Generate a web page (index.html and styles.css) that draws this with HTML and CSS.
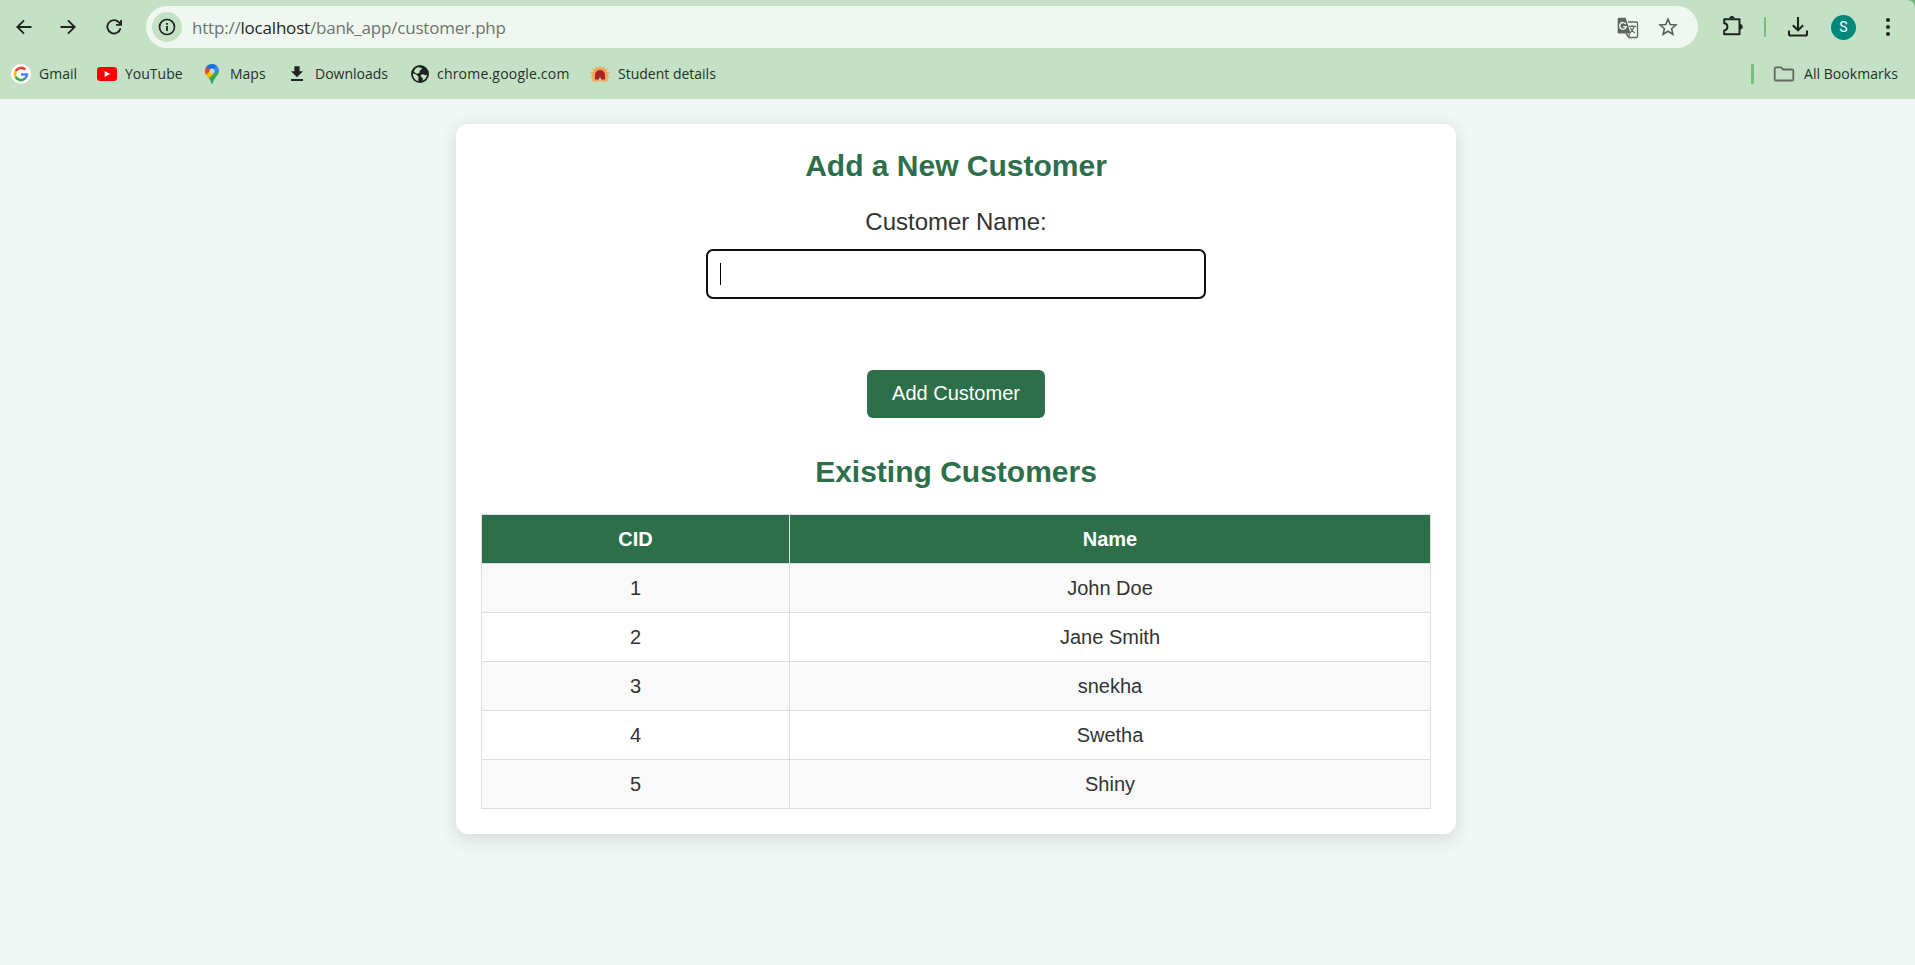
FILE: index.html
```html
<!DOCTYPE html>
<html lang="en">
<head>
<meta charset="utf-8">
<title>Customers</title>
<link rel="stylesheet" href="styles.css">
</head>
<body>
<div class="frame">
<header class="browser">
  <div class="toolbar">
    <svg class="nav-icon" viewBox="0 0 24 24"><path d="M21 12H4.500M12 4l-8 8 8 8"/></svg>
    <svg class="nav-icon forward" viewBox="0 0 24 24"><path d="M3 12h16.500M12 4l8 8-8 8"/></svg>
    <svg class="nav-icon" viewBox="0 0 24 24"><path d="M19.800 13.500A8 8 0 1 1 17.800 6.300L20 8.500M20.500 3.500v6h-6"/></svg>
    <div class="omnibox">
      <span class="site-info"><svg width="20" height="20" viewBox="0 0 20 20"><circle cx="10" cy="10" r="7.500" fill="none" stroke="#1f2421" stroke-width="1.700"/><path fill="#1f2421" d="M9.100 9h1.800v5H9.100zM9.100 6h1.800v1.800H9.100z"/></svg></span>
      <span class="url">http://<b class="host">localhost</b>/bank_app/customer.php</span>
      <svg class="translate" width="22" height="22" viewBox="0 0 22 22">
        <path d="M11 5h8.200q1.300 0 1.300 1.300v12.900q0 1.300-1.300 1.300H12l-3-4" fill="none" stroke="#5f6561" stroke-width="1.300"/>
        <path d="M2 .7h6.600l5 15.800H2Q.700 16.500.700 15.200V2Q.700.700 2 .700z" fill="#5f6561"/>
        <path d="M8.700 7A3.300 3.300 0 1 0 9.200 9.600H6.200" fill="none" stroke="#f0f7f0" stroke-width="1.400"/>
        <path d="M11.500 9.400h7.500M15.100 7.900v1.500M17.300 9.400q-1 4-4.700 6.800M13.300 10.800q1.500 3.300 4.500 5.300M12.500 17l-.8 3" fill="none" stroke="#5f6561" stroke-width="1.200"/>
      </svg>
      <svg class="star" width="20" height="20" viewBox="0 0 20 20"><path d="M10 2.200l2.200 5.300 5.700.5-4.300 3.700 1.300 5.600-4.900-3-4.900 3 1.300-5.600L2.100 8l5.700-.5z" fill="none" stroke="#5a615c" stroke-width="1.600"/></svg>
    </div>
    <svg class="puzzle" width="22" height="22" viewBox="0 0 22 22"><path d="M2.200 4.200h15.300v15H2.200v-3.800c4.300-.3 4.300-7 0-7.200z" fill="none" stroke="#1f2421" stroke-width="2" stroke-linejoin="round"/><path d="M7.200 3.600a2.700 2.700 0 0 1 5.400 0zM18 9a2.700 2.700 0 0 1 0 5.400z" fill="#1f2421"/></svg>
    <span class="divider"></span>
    <svg class="download" width="22" height="22" viewBox="0 0 22 22"><path d="M11 1v13M5.800 9.200l5.200 5 5.200-5M2 14.500v3.500q0 1.500 1.500 1.500h15q1.500 0 1.500-1.500v-3.500" fill="none" stroke="#1f2421" stroke-width="2.100"/></svg>
    <span class="avatar">S</span>
    <svg class="dots" width="6" height="20" viewBox="0 0 6 20"><g fill="#1f2421"><circle cx="3" cy="3" r="2"/><circle cx="3" cy="10" r="2"/><circle cx="3" cy="17" r="2"/></g></svg>
  </div>
  <nav class="bookmarks">
    <a class="bookmark"><svg width="20" height="20" viewBox="0 0 20 20"><circle cx="10" cy="10" r="10" fill="#fff"/><g fill="none" stroke-width="2.600"><path d="M14.300 5.700A6.100 6.100 0 0 0 4.700 7" stroke="#ea4335"/><path d="M4.700 7a6.100 6.100 0 0 0 0 6" stroke="#fbbc05"/><path d="M4.700 13a6.100 6.100 0 0 0 9.300 1.600" stroke="#34a853"/><path d="M14 14.600a6.100 6.100 0 0 0 2-4.100H10" stroke="#4285f4"/></g></svg><span>Gmail</span></a>
    <a class="bookmark"><svg width="20" height="20" viewBox="0 0 20 20"><rect y="3" width="20" height="14" rx="3.200" fill="#f00"/><path d="M7.700 7v6l5.400-3z" fill="#fff"/></svg><span>YouTube</span></a>
    <a class="bookmark"><svg width="20" height="20" viewBox="0 0 20 20"><defs><clipPath id="pin"><path d="M10 0a7 7 0 0 0-7 7c0 4.300 5 6.500 6.200 12 .2 1.200 1.400 1.200 1.600 0C12 13.500 17 11.300 17 7a7 7 0 0 0-7-7z"/></clipPath></defs><g clip-path="url(#pin)"><path fill="#34a853" d="M0 0h20v20H0z"/><path fill="#fbbc04" d="M1 10L9 2l5 6-9 8z"/><path fill="#ea4335" d="M0 0h5l5 5-7 7-3-3z"/><path fill="#1a73e8" d="M4 2l6-4 6 3-6 6z"/><path fill="#4285f4" d="M15.500 1L18 7l-7 3-1-3z"/></g><circle cx="10" cy="7" r="2.500" fill="#c4e1c5"/></svg><span>Maps</span></a>
    <a class="bookmark"><svg width="20" height="20" viewBox="0 0 20 20"><path d="M7.400 2.300h5.200v5H16l-6 6-6-6h3.400zM4 15h12v2H4z" fill="#1f2421"/></svg><span>Downloads</span></a>
    <a class="bookmark"><svg width="20" height="20" viewBox="0 0 20 20"><circle cx="10" cy="10" r="9" fill="#1f2421"/><path fill="#c4e1c5" d="M3 9.200l3.200 1.300 2.300 2.200-.2 4.500A7.300 7.300 0 0 1 3 9.200zM8 3.100c1 .9 3.200.4 3.800 1.200.5 1-1.300 1.500-2 2.400-.6.700.7 1.800-.8 2.200-1.300.4-2 1.500-3.200.4L3.800 7.500A7 7 0 0 1 8 3.100zM11 10.700c1.100-1 2.500-.5 3.600.2.800.6 1.600.3 2.400.2-.5 2.600-2 4.600-4.500 5.600.8-1.500.4-2.600-.8-3.500-.7-.7-1.200-1.600-.7-2.500z"/></svg><span class="site">chrome.google.com</span></a>
    <a class="bookmark"><svg width="20" height="20" viewBox="0 0 20 20"><path fill="#f2a65a" d="M10 1.800l1.500 2.300 2.500-1.600.5 2.800 3-.5-.9 2.900 2.900.8-2 2.200 2.300 2-2.600 1.300 1.300 2.500-3.500 1H5l-3.500-1 1.300-2.500L.2 12.700l2.300-2-2-2.200 2.900-.8-.9-2.900 3 .5.500-2.800 2.500 1.600z"/><path fill="#aa231f" d="M5 15.500V11a5 5 0 0 1 10 0v4.500z"/><path d="M8 16.500l2-3.500 2 3.500z" fill="#d8c2b6"/></svg><span>Student details</span></a>
    <span class="divider wide"></span>
    <a class="bookmark all"><svg width="22" height="20" viewBox="0 0 22 20"><path d="M3 3.300h5.200l2 2.200H19q1.300 0 1.300 1.300v8.400q0 1.300-1.300 1.300H3q-1.300 0-1.300-1.300V4.600Q1.700 3.300 3 3.300z" fill="none" stroke="#626963" stroke-width="1.800"/></svg><span>All Bookmarks</span></a>
  </nav>
</header>
</div>
<main class="card">
  <h2 class="title">Add a New Customer</h2>
  <form class="form">
    <label class="label" for="name">Customer Name:</label>
    <div class="field" id="name"><span class="caret"></span></div>
    <button class="submit" type="button">Add Customer</button>
  </form>
  <h2 class="title">Existing Customers</h2>
  <table class="customers">
    <colgroup><col class="col-id"><col></colgroup>
    <thead><tr><th>CID</th><th>Name</th></tr></thead>
    <tbody>
      <tr><td>1</td><td>John Doe</td></tr>
      <tr><td>2</td><td>Jane Smith</td></tr>
      <tr><td>3</td><td>snekha</td></tr>
      <tr><td>4</td><td>Swetha</td></tr>
      <tr><td>5</td><td>Shiny</td></tr>
    </tbody>
  </table>
</main>
</body>
</html>
```
FILE: styles.css
```css
* { box-sizing: border-box; }
body {
  margin: 0;
  height: 965px;
  overflow: hidden;
  background: #f0f7f4;
  color: #333;
  font-family: "Liberation Sans", Arial, sans-serif;
}
svg { display: block; flex: none; }

/* Browser chrome */
.frame { background: linear-gradient(#6fb877 20px, #c4e1c5 20px); }
.browser {
  height: 99px;
  background: #c4e1c5;
  border-top-right-radius: 8px;
  font-family: "Open Sans", "Noto Sans", sans-serif;
}
.toolbar {
  display: flex;
  align-items: center;
  height: 54px;
  padding-left: 14px;
}
.nav-icon {
  width: 20px;
  height: 20px;
  margin-right: 25px;
  fill: none;
  stroke: #1f2421;
  stroke-width: 2.2;
}
.nav-icon.forward { margin: 0 26px 0 -1px; }
.omnibox {
  display: flex;
  align-items: center;
  width: 1552px;
  height: 42px;
  margin-left: -3px;
  padding: 0 20px 0 6px;
  border-radius: 21px;
  background: #f0f7f0;
}
.site-info {
  display: grid;
  place-items: center;
  width: 30px;
  height: 30px;
  border-radius: 50%;
  background: #c4e1c5;
}
.url {
  margin: 2px 0 0 10px;
  color: #6c736e;
  font-size: 17px;
  letter-spacing: -0.2px;
  line-height: 24px;
  white-space: nowrap;
}
.host { color: #1f2421; font-weight: 400; }
.translate { margin: 2px 0 0 auto; }
.star { margin-left: 19px; }
.puzzle { margin: -2px 0 0 24px; }
.divider {
  width: 2px;
  height: 20px;
  margin-left: 20px;
  border-radius: 1px;
  background: #77bd7b;
}
.download { margin-left: 21px; }
.avatar {
  width: 25px;
  height: 25px;
  margin-left: 22px;
  border-radius: 50%;
  background: #00897b;
  color: #fff;
  font: 14px/25px Roboto, sans-serif;
  text-align: center;
}
.dots { margin-left: 29px; }

.bookmarks {
  display: grid;
  grid-template-columns: 86px 105px 85px 123px 180px 1161px 22px auto;
  align-items: center;
  height: 40px;
  padding-left: 11px;
}
.bookmark {
  display: flex;
  align-items: center;
  gap: 8px;
  color: #26302a;
  font-size: 14px;
  line-height: 20px;
  white-space: nowrap;
}
.site { margin-left: -1px; letter-spacing: 0.2px; }
.divider.wide { width: 3px; margin: 0; }
.all { gap: 9px; letter-spacing: 0.05px; }

/* Customer card */
.card {
  width: 1000px;
  height: 710px;
  margin: 25px 0 0 456px;
  padding: 25px;
  border-radius: 12px;
  background: #fff;
  box-shadow: 0 5px 19px rgba(0, 0, 0, 0.12);
}
.title {
  margin: 0;
  color: #2d6f4a;
  font-size: 30px;
  line-height: 34px;
  text-align: center;
}
.form {
  display: flex;
  flex-direction: column;
  align-items: center;
  padding: 25px 0 37px;
}
.label { font-size: 24px; line-height: 28px; }
.field {
  width: 500px;
  height: 50px;
  margin: 13px 0 71px;
  padding: 12px;
  border: 2px solid #101010;
  border-radius: 7px;
}
.caret { display: block; width: 1px; height: 22px; background: #000; }
.submit {
  width: 178px;
  height: 48px;
  padding: 0 0 2px;
  border: 0;
  border-radius: 6px;
  background: #2d6f4a;
  color: #fff;
  font: 20px/46px "Liberation Sans", Arial, sans-serif;
}
.customers {
  width: 950px;
  margin-top: 25px;
  border-collapse: collapse;
  table-layout: fixed;
  font-size: 20px;
  line-height: 24px;
  text-align: center;
}
.col-id { width: 308px; }
.customers th, .customers td {
  height: 49px;
  padding: 0;
  border: 1px solid #ddd;
}
.customers th { background: #2d6f4a; color: #fff; }
.customers tbody tr:nth-child(odd) { background: #f9f9f9; }
```
